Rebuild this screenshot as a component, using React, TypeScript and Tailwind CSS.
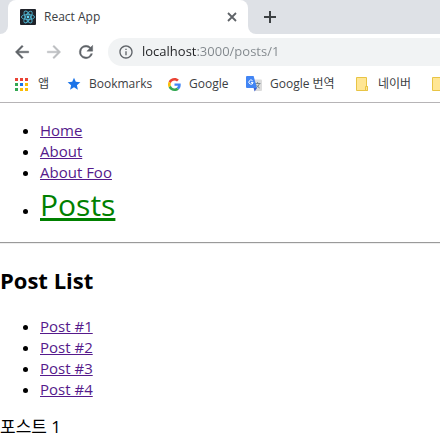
import type { ReactNode } from "react";

function ReactLogo() {
  return (
    <svg viewBox="0 0 16 16" className="size-4 shrink-0" aria-hidden="true">
      <rect width="16" height="16" rx="1" fill="#20232a" />
      <g fill="none" stroke="#4fb3cf" strokeWidth="0.9">
        <ellipse cx="8" cy="8" rx="6.6" ry="2.6" />
        <ellipse cx="8" cy="8" rx="6.6" ry="2.6" transform="rotate(60 8 8)" />
        <ellipse cx="8" cy="8" rx="6.6" ry="2.6" transform="rotate(120 8 8)" />
      </g>
      <circle cx="8" cy="8" r="1.4" fill="#61dafb" />
    </svg>
  );
}

function BackIcon() {
  return (
    <svg viewBox="0 0 24 24" className="size-5" fill="currentColor" stroke="currentColor" strokeWidth="0.5" aria-hidden="true">
      <path d="M20 11H7.83l5.59-5.59L12 4l-8 8 8 8 1.41-1.41L7.83 13H20v-2z" />
    </svg>
  );
}

function ForwardIcon() {
  return (
    <svg viewBox="0 0 24 24" className="size-5" fill="currentColor" stroke="currentColor" strokeWidth="0.5" aria-hidden="true">
      <path d="M12 4l-1.41 1.41L16.17 11H4v2h12.17l-5.58 5.59L12 20l8-8z" />
    </svg>
  );
}

function ReloadIcon() {
  return (
    <svg viewBox="0 0 24 24" className="size-5" fill="currentColor" stroke="currentColor" strokeWidth="0.5" aria-hidden="true">
      <path d="M17.65 6.35A7.96 7.96 0 0 0 12 4a8 8 0 1 0 7.73 10h-2.08A6 6 0 1 1 12 6c1.66 0 3.14.69 4.22 1.78L13 11h7V4l-2.35 2.35z" />
    </svg>
  );
}

function InfoIcon() {
  return (
    <svg viewBox="0 0 24 24" className="size-4" fill="currentColor" aria-hidden="true">
      <path d="M11 17h2v-6h-2v6zm1-15C6.48 2 2 6.48 2 12s4.48 10 10 10 10-4.48 10-10S17.52 2 12 2zm0 18c-4.41 0-8-3.59-8-8s3.59-8 8-8 8 3.59 8 8-3.59 8-8 8zM11 9h2V7h-2v2z" />
    </svg>
  );
}

function AppsIcon() {
  const dots = ["#ea4335", "#ea4335", "#ea4335", "#34a853", "#1a73e8", "#fbbc04", "#34a853", "#fbbc04", "#fbbc04"];
  return (
    <svg viewBox="0 0 13 13" className="w-[13px] h-[13px] shrink-0" shapeRendering="crispEdges" aria-hidden="true">
      {dots.map((fill, i) => (
        <rect key={i} x={(i % 3) * 5} y={Math.floor(i / 3) * 5} width="3" height="3" fill={fill} />
      ))}
    </svg>
  );
}

function StarIcon() {
  return (
    <svg viewBox="1 1 22 22" className="size-3.5 shrink-0" fill="#1a73e8" aria-hidden="true">
      <path d="M12 17.27 18.18 21l-1.64-7.03L22 9.24l-7.19-.61L12 2 9.19 8.63 2 9.24l5.46 4.73L5.82 21z" />
    </svg>
  );
}

function GoogleIcon() {
  return (
    <svg viewBox="0 0 48 48" className="w-[13px] h-[13px] shrink-0" aria-hidden="true">
      <path fill="#EA4335" d="M24 9.5c3.54 0 6.71 1.22 9.21 3.6l6.85-6.85C35.9 2.38 30.47 0 24 0 14.62 0 6.51 5.38 2.56 13.22l7.98 6.19C12.43 13.72 17.74 9.5 24 9.5z" />
      <path fill="#4285F4" d="M46.98 24.55c0-1.57-.15-3.09-.38-4.55H24v9.02h12.94c-.58 2.96-2.26 5.48-4.78 7.18l7.73 6c4.51-4.18 7.09-10.36 7.09-17.65z" />
      <path fill="#FBBC05" d="M10.53 28.59A14.5 14.5 0 0 1 9.77 24c0-1.6.27-3.14.76-4.59l-7.98-6.19A23.99 23.99 0 0 0 0 24c0 3.88.92 7.54 2.56 10.78l7.97-6.19z" />
      <path fill="#34A853" d="M24 48c6.48 0 11.93-2.13 15.89-5.81l-7.73-6c-2.15 1.45-4.92 2.3-8.16 2.3-6.26 0-11.57-4.22-13.47-9.91l-7.98 6.19C6.51 42.62 14.62 48 24 48z" />
    </svg>
  );
}

function TranslateIcon() {
  return (
    <svg viewBox="0 0 16 16" className="size-4 shrink-0" aria-hidden="true">
      <path d="M6 3.5h9a1 1 0 0 1 1 1V14a1 1 0 0 1-1 1H9z" fill="#dcdcdc" />
      <path d="M9 7.5h5.5M11.6 6v1.5M13.4 7.5c-.5 2-1.8 3.6-3.4 4.5M10.4 8.8c.7 1.5 1.9 2.6 3.3 3.2" fill="none" stroke="#72828a" strokeWidth="0.9" />
      <path d="M7.6 12H11l-2.4 3.6z" fill="#3b5fd0" />
      <path d="M1 0h6.6L11 12H1a1 1 0 0 1-1-1V1a1 1 0 0 1 1-1z" fill="#4285f4" />
      <path d="M6.6 4.7A2.1 2.1 0 1 0 7.1 6.4H5" fill="none" stroke="#fff" strokeWidth="1" />
    </svg>
  );
}

function FolderIcon() {
  return (
    <svg viewBox="0 0 12 14" className="w-3 h-3.5 shrink-0" aria-hidden="true">
      <path d="M.5.5h10v9h1v4H.5z" fill="#ffe694" stroke="#e8c445" />
      <path d="M9.5 13V9.5h2v4h-2z" fill="#ffe694" stroke="#e8c445" />
    </svg>
  );
}

function Bookmark({ icon, label, className = "" }: { icon: ReactNode; label: string; className?: string }) {
  return (
    <a href="#" className={`flex shrink-0 items-center whitespace-nowrap ${className}`}>
      {icon}
      <span>{label}</span>
    </a>
  );
}

const navLink = "text-[#551a8b] underline";

export default function App() {
  return (
    <div className="overflow-hidden bg-white font-['Open_Sans','Noto_Sans_CJK_KR',sans-serif] text-black">
      <header className="border-b border-[#b6b4b6]">
        <div className="flex h-[34px] bg-white">
          <div className="w-2 rounded-br-lg bg-[#dee1e6]" />
          <div className="w-60 bg-[#dee1e6]">
            <div className="flex h-full items-center rounded-t-lg bg-white pl-3 pr-2.5">
              <ReactLogo />
              <span className="ml-2 flex-1 text-xs text-[#3c4043]">React App</span>
              <button type="button" aria-label="Close tab" className="text-[#5f6368]">
                <svg viewBox="0 0 12 12" className="size-3" stroke="currentColor" strokeWidth="1.8" aria-hidden="true">
                  <path d="M2 2l8 8M10 2l-8 8" />
                </svg>
              </button>
            </div>
          </div>
          <div className="flex flex-1 items-center rounded-bl-lg bg-[#dee1e6] pl-4">
            <button type="button" aria-label="New tab" className="text-[#3c4043]">
              <svg viewBox="0 0 12 12" className="size-3" stroke="currentColor" strokeWidth="2" aria-hidden="true">
                <path d="M6 0v12M0 6h12" />
              </svg>
            </button>
          </div>
        </div>
        <div className="flex h-9 items-center gap-3 pl-3 text-[#5f6368]">
          <button type="button" aria-label="Back"><BackIcon /></button>
          <button type="button" aria-label="Forward" className="text-[#bcbec1]"><ForwardIcon /></button>
          <button type="button" aria-label="Reload"><ReloadIcon /></button>
          <div className="flex h-7 min-w-0 flex-1 items-center gap-2 rounded-l-full bg-[#f1f3f4] pl-2.5">
            <InfoIcon />
            <input
              aria-label="Address"
              defaultValue="localhost:3000/posts/1"
              className="min-w-0 flex-1 bg-[linear-gradient(to_right,#202124_55px,#80868b_55px)] bg-clip-text text-[13px] text-transparent outline-none"
            />
          </div>
        </div>
        <nav aria-label="Bookmarks" className="flex h-8 items-center overflow-hidden pb-1 pl-[15px] text-xs text-[#3c4043]">
          <Bookmark icon={<AppsIcon />} label="앱" className="w-[52px] gap-2.5" />
          <Bookmark icon={<StarIcon />} label="Bookmarks" className="w-[101px] gap-2" />
          <Bookmark icon={<GoogleIcon />} label="Google" className="w-[78px] gap-2" />
          <Bookmark icon={<TranslateIcon />} label="Google 번역" className="w-[110px] gap-2" />
          <Bookmark icon={<FolderIcon />} label="네이버" className="w-[76px] gap-2.5" />
          <Bookmark icon={<FolderIcon />} label="" />
        </nav>
      </header>
      <main className="pt-px text-[15px] leading-[21px]">
        <ul className="my-4 list-disc pl-10">
          <li><a href="#" className={navLink}>Home</a></li>
          <li><a href="#" className={navLink}>About</a></li>
          <li><a href="#" className={navLink}>About Foo</a></li>
          <li><a href="#" className="text-3xl leading-[43px] text-[#008000] underline">Posts</a></li>
        </ul>
        <hr className="border-t border-b border-t-[#9a9a9a] border-b-[#eeeeee]" />
        <h2 className="my-5 text-[22px] font-bold leading-8">Post List</h2>
        <ul className="my-4 list-disc pl-10">
          <li><a href="#" className={navLink}>Post #1</a></li>
          <li><a href="#" className={navLink}>Post #2</a></li>
          <li><a href="#" className={navLink}>Post #3</a></li>
          <li><a href="#" className={navLink}>Post #4</a></li>
        </ul>
        <div className="text-[17px]">포스트 1</div>
      </main>
    </div>
  );
}
